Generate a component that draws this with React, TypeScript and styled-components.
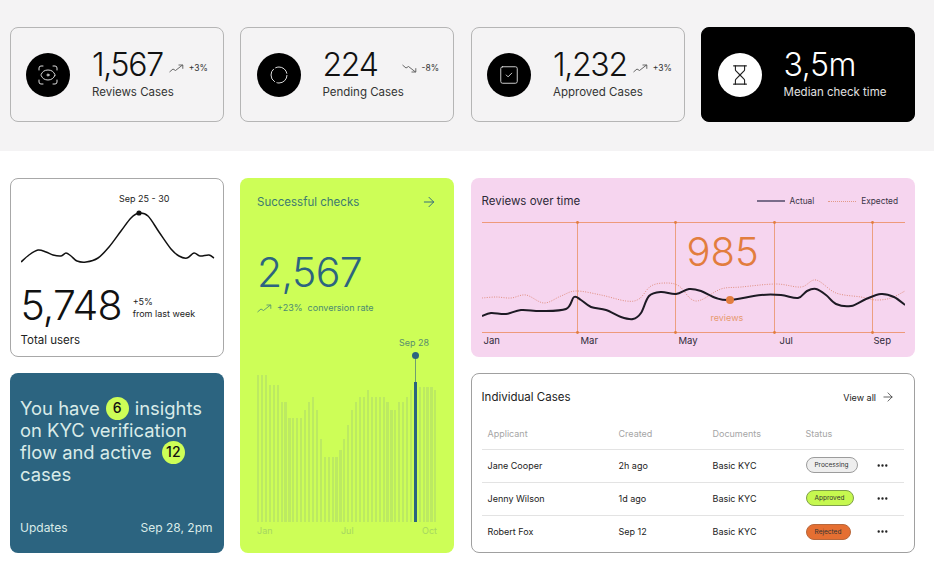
import React from "react";
import styled, {createGlobalStyle} from "styled-components";
import {ArrowRight, Ellipsis, Hourglass, ScanEye, SquareCheck} from "lucide-react";

const GlobalStyle = createGlobalStyle`
  body {
    margin: 0;
    background: #fff;
    font-family: "Inter", "Liberation Sans", sans-serif;
    color: #111;
    overflow: hidden;
  }
`;

const Band = styled.section`
  background: #f4f3f4;
  height: 151px;
  box-sizing: border-box;
  padding: 27px 19px 0 9.5px;
  display: grid;
  grid-template-columns: repeat(4, 214px);
  gap: 16.5px;
  align-items: start;
`;

const StatCard = styled.div<{ $dark?: boolean }>`
  height: 95px;
  box-sizing: border-box;
  border-radius: 8px;
  border: 1px solid ${p => p.$dark ? "#000" : "#b5b5b5"};
  background: ${p => p.$dark ? "#000" : "transparent"};
  color: ${p => p.$dark ? "#fff" : "#111"};
  display: flex;
  align-items: center;
  gap: 22px;
  padding: 0 0 0 15.5px;
`;

const IconCircle = styled.div<{ $dark?: boolean }>`
  width: 44px;
  height: 44px;
  border-radius: 50%;
  flex: none;
  background: ${p => p.$dark ? "#fff" : "#000"};
  color: ${p => p.$dark ? "#222" : "#ddd"};
  display: flex;
  align-items: center;
  justify-content: center;
`;

const StatBody = styled.div`
  display: flex;
  flex-direction: column;
  gap: 2px;
  margin-bottom: 4px;
`;

const StatTop = styled.div`
  display: flex;
  align-items: center;
`;

const StatNumber = styled.span<{ $dark?: boolean }>`
  font-size: 32px;
  font-weight: 300;
  line-height: 36px;
  letter-spacing: ${p => p.$dark ? -0.4 : -1.3}px;
`;

const StatLabel = styled.span<{ $dark?: boolean }>`
  font-size: 11.5px;
  line-height: 14px;
  color: ${p => p.$dark ? "#e2e2e2" : "#333"};
`;

const Delta = styled.span<{ $left: number }>`
  display: flex;
  align-items: center;
  gap: 5px;
  margin-left: ${p => p.$left}px;
  margin-top: 7px;
  font-size: 8.5px;
  color: #333;
`;

const Board = styled.main`
  padding: 27px 19px 0 9.5px;
  display: grid;
  grid-template-columns: repeat(4, 214px);
  grid-template-rows: 179px 180px;
  gap: 16px 16.5px;
`;

const UsersCard = styled.section`
  grid-column: 1;
  grid-row: 1;
  border: 1px solid #a8a8a8;
  border-radius: 8px;
  box-sizing: border-box;
  padding: 13px 10px 0;
`;

const PeakLabel = styled.div`
  font-size: 9px;
  line-height: 12px;
  padding-left: 98.5px;
  margin-top: 1px;
  color: #222;
`;

const BlockSvg = styled.svg`
  display: block;
`;

const UsersRow = styled.div`
  display: flex;
  align-items: center;
  gap: 11px;
  margin-top: 15px;
`;

const UsersNumber = styled.span`
  font-size: 41px;
  line-height: 46px;
  font-weight: 300;
  letter-spacing: -0.9px;
`;

const UsersNote = styled.span`
  font-size: 9px;
  line-height: 12px;
  margin-top: 6px;
  color: #222;
`;

const UsersLabel = styled.div`
  font-size: 11.5px;
  line-height: 14px;
  margin-top: 5px;
  color: #222;
`;

const GreenCard = styled.section`
  grid-column: 2;
  grid-row: 1 / span 2;
  background: #cdfe57;
  border-radius: 8px;
  padding: 17px 17px 0;
  display: flex;
  flex-direction: column;
  color: #2c6480;
`;

const GreenHead = styled.div`
  display: flex;
  justify-content: space-between;
  align-items: center;
  height: 14px;
  font-size: 11.5px;
  color: #3d7a70;
`;

const GreenNumber = styled.div`
  font-size: 41px;
  font-weight: 300;
  line-height: 46px;
  margin-top: 40px;
  letter-spacing: -0.6px;
`;

const GreenNote = styled.div`
  display: flex;
  align-items: center;
  gap: 5px;
  font-size: 9px;
  line-height: 12px;
  margin-top: 7px;
  color: #4b8a72;
`;

const Bars = styled.div`
  height: 168px;
  margin-top: 40px;
  display: flex;
  align-items: flex-end;
  justify-content: space-between;
`;

const Bar = styled.div`
  width: 2.2px;
  background: #bcea62;
`;

const ActiveBar = styled.div`
  width: 3px;
  background: #2c6480;
  position: relative;

  &::before {
    content: "";
    position: absolute;
    left: 1px;
    bottom: 100%;
    width: 1px;
    height: 26px;
    background: #6f9f70;
  }

  &::after {
    content: "";
    position: absolute;
    left: -2px;
    top: -30px;
    width: 7px;
    height: 7px;
    border-radius: 50%;
    background: #2c6480;
  }
`;

const ActiveLabel = styled.span`
  position: absolute;
  left: -15px;
  top: -45px;
  font-size: 9px;
  line-height: 12px;
  white-space: nowrap;
  color: #5a8f6c;
`;

const Axis = styled.div`
  display: flex;
  justify-content: space-between;
  font-size: 9px;
  line-height: 12px;
  margin-top: 3px;
  color: #a6d662;
`;

const PinkCard = styled.section`
  grid-column: 3 / span 2;
  grid-row: 1;
  background: #f6d5ef;
  border-radius: 8px;
  padding: 16px 11px 0;
`;

const PinkHead = styled.div`
  display: flex;
  align-items: center;
  height: 14px;
  font-size: 11.5px;
  color: #2e2a38;
`;

const Legend = styled.div`
  margin-left: auto;
  margin-right: 6px;
  display: flex;
  align-items: center;
  gap: 5px;
  font-size: 8.3px;
  color: #3a3446;
`;

const LegendLine = styled.span<{ $dotted?: boolean }>`
  width: 28px;
  margin-left: ${p => p.$dotted ? 9 : 0}px;
  border-top: ${p => p.$dotted ? "1px dotted #e39a88" : "2px solid #7a6c8a"};
`;

const ChartWrap = styled.div`
  position: relative;
  margin-top: 11px;
`;

const BigValue = styled.span`
  position: absolute;
  left: 205px;
  top: 9px;
  font-size: 40px;
  line-height: 48px;
  font-weight: 300;
  color: #e27d3e;
`;

const ValueCaption = styled.span`
  position: absolute;
  left: 229px;
  top: 93px;
  font-size: 9px;
  line-height: 12px;
  color: #e79a70;
`;

const Months = styled.div`
  display: grid;
  grid-template-columns: 97px 98px 101px 94px 1fr;
  padding-left: 2px;
  font-size: 9.5px;
  line-height: 12px;
  color: #2e2a38;
`;

const TableCard = styled.section`
  grid-column: 3 / span 2;
  grid-row: 2;
  border: 1px solid #a0a0a0;
  border-radius: 8px;
  padding: 15px 10px 0;
  box-sizing: border-box;
`;

const TableHead = styled.div`
  display: flex;
  justify-content: space-between;
  align-items: center;
  height: 16px;
  font-size: 11.5px;
  color: #222;
`;

const ViewAll = styled.span`
  display: flex;
  align-items: center;
  gap: 5px;
  font-size: 9px;
  margin-right: 9px;
`;

const Row = styled.div<{ $head?: boolean }>`
  display: grid;
  grid-template-columns: 131px 94px 93px 70px 1fr;
  align-items: center;
  box-sizing: border-box;
  height: 33px;
  padding: 0 0 2px 6px;
  font-size: 9px;
  color: ${p => p.$head ? "#a5a5a5" : "#222"};
  border-bottom: 1px solid #e3e3e3;

  &:first-child {
    padding-bottom: 0;
  }

  &:last-child {
    border-bottom: none;
  }
`;

const TableRows = styled.div`
  margin-top: 12px;
`;

const pillColors = {
    Processing: {bg: "#eeeeee", line: "#9c9c9c", width: 52},
    Approved: {bg: "#c6f84f", line: "#7f9f4a", width: 48},
    Rejected: {bg: "#e56f32", line: "#b8683c", width: 45}
};

const Pill = styled.span<{ $bg: string, $line: string, $width: number }>`
  width: ${p => p.$width}px;
  height: 16px;
  box-sizing: border-box;
  border-radius: 8px;
  border: 1px solid ${p => p.$line};
  background: ${p => p.$bg};
  display: flex;
  align-items: center;
  justify-content: center;
  font-size: 6.5px;
  color: #333;
`;

const Teal = styled.section`
  grid-column: 1;
  grid-row: 2;
  background: #2c6480;
  border-radius: 8px;
  padding: 24px 11px 0 10.5px;
  color: #d9ebe8;
  display: flex;
  flex-direction: column;
`;

const TealText = styled.div`
  font-size: 18.4px;
  height: 110px;
`;

const TealLine = styled.div<{ $gap?: number }>`
  display: flex;
  align-items: center;
  gap: ${p => p.$gap ?? 0}px;
  height: 22px;
`;

const Count = styled.span`
  flex: none;
  display: flex;
  align-items: center;
  justify-content: center;
  width: 23px;
  height: 23px;
  border-radius: 50%;
  background: #cdfe57;
  color: #111;
  font-size: 14px;
  font-weight: 500;
  line-height: 16px;
`;

const TealFoot = styled.div`
  display: flex;
  justify-content: space-between;
  font-size: 12px;
  line-height: 14px;
  margin-top: 14px;
`;

// x,y readings are in page coordinates, the viewBoxes below use the same ones
type Pt = [number, number]

function smooth(points: Pt[]) {
    let d = `M${points[0][0]} ${points[0][1]}`
    for (let i = 0; i < points.length - 1; i++) {
        const p0 = points[Math.max(i - 1, 0)]
        const p1 = points[i]
        const p2 = points[i + 1]
        const p3 = points[Math.min(i + 2, points.length - 1)]
        const c1x = p1[0] + (p2[0] - p0[0]) / 6
        const c1y = p1[1] + (p2[1] - p0[1]) / 6
        const c2x = p2[0] - (p3[0] - p1[0]) / 6
        const c2y = p2[1] - (p3[1] - p1[1]) / 6
        d += ` C${c1x} ${c1y} ${c2x} ${c2y} ${p2[0]} ${p2[1]}`
    }
    return d
}

const usersLine: Pt[] = [[20, 261], [28, 254], [37, 249], [45, 251], [52, 254], [60, 255], [65, 252], [70, 255], [76, 260], [85, 261], [97, 257], [108, 246], [120, 230], [130, 217], [138, 212], [147, 215], [158, 231], [170, 248], [178, 255], [186, 257], [193, 252], [199, 255], [208, 254], [213, 257]]

const actualLine: Pt[] = [[481, 316], [490, 313], [505, 314], [520, 310], [540, 311], [565, 309], [573, 297], [580, 300], [590, 307], [605, 310], [620, 317], [632, 319], [640, 313], [648, 296], [660, 292], [675, 294], [688, 289], [700, 291], [715, 298], [729, 300], [760, 295], [780, 295], [797, 298], [806, 291], [815, 289], [825, 295], [835, 304], [850, 306], [865, 299], [880, 294], [893, 297], [904, 305]]

const expectedLine: Pt[] = [[481, 298], [495, 297], [510, 298], [525, 295], [543, 303], [560, 296], [575, 291], [600, 295], [625, 301], [638, 299], [650, 286], [665, 283], [678, 286], [690, 299], [700, 300], [720, 289], [740, 287], [775, 284], [800, 287], [815, 280], [835, 293], [860, 297], [875, 300], [890, 298], [904, 291]]

const barTops = [133, 133, 133, 163, 163, 163, 215, 215, 262, 262, 262, 262, 240, 215, 200, 240, 325, 380, 380, 380, 380, 360, 325, 285, 240, 215, 200, 200, 180, 200, 200, 200, 200, 215, 240, 240, 215, 215, 200, 180, 155, 170, 170, 170, 170, 180]
const activeBar = 40

const cases = [
    {name: "Jane Cooper", created: "2h ago", status: "Processing" as const},
    {name: "Jenny Wilson", created: "1d ago", status: "Approved" as const},
    {name: "Robert Fox", created: "Sep 12", status: "Rejected" as const}
]

function Trend(props: { down?: boolean, color?: string }) {
    return (
        <svg width="15" height="9" viewBox="0 0 15 9" fill="none" stroke={props.color ?? "#444"} strokeWidth="0.8"
             style={props.down ? {transform: "scaleY(-1)"} : undefined}>
            <path d="M0.5 8 L4 5 L6.5 6.5 L13.5 1"/>
            <path d="M9.5 1 H13.8 V4.8"/>
        </svg>
    )
}

function Stat(props: { value: string, label: string, delta?: string, down?: boolean, left?: number, dark?: boolean, icon: React.ReactNode }) {
    return (
        <StatCard $dark={props.dark}>
            <IconCircle $dark={props.dark}>{props.icon}</IconCircle>
            <StatBody>
                <StatTop>
                    <StatNumber $dark={props.dark}>{props.value}</StatNumber>
                    {props.delta &&
                        <Delta $left={props.left ?? 6}><Trend down={props.down}/>{props.delta}</Delta>}
                </StatTop>
                <StatLabel $dark={props.dark}>{props.label}</StatLabel>
            </StatBody>
        </StatCard>
    )
}

export default function App() {
    return (
        <>
            <GlobalStyle/>
            <Band>
                <Stat value="1,567" label="Reviews Cases" delta="+3%" icon={<ScanEye size={24} strokeWidth={1}/>}/>
                <Stat value="224" label="Pending Cases" delta="-8%" down left={24} icon={
                    <svg width="20" height="20" viewBox="0 0 20 20" fill="none" stroke="#ddd" strokeWidth="1">
                        <circle cx="10" cy="10" r="8" strokeDasharray="15 1.8"/>
                    </svg>
                }/>
                <Stat value="1,232" label="Approved Cases" delta="+3%" icon={<SquareCheck size={22} strokeWidth={1}/>}/>
                <Stat value="3,5m" label="Median check time" dark icon={<Hourglass size={22} strokeWidth={1.2}/>}/>
            </Band>
            <Board>
                <UsersCard>
                    <PeakLabel>Sep 25 - 30</PeakLabel>
                    <BlockSvg width="194" height="62" viewBox="20 204 194 62" fill="none">
                        <path d={smooth(usersLine)} stroke="#111" strokeWidth="1.5"/>
                        <circle cx="138" cy="212" r="2.6" fill="#111"/>
                    </BlockSvg>
                    <UsersRow>
                        <UsersNumber>5,748</UsersNumber>
                        <UsersNote>+5%<br/>from last week</UsersNote>
                    </UsersRow>
                    <UsersLabel>Total users</UsersLabel>
                </UsersCard>
                <GreenCard>
                    <GreenHead>Successful checks<ArrowRight size={16} strokeWidth={1.4} color="#2c6480"/></GreenHead>
                    <GreenNumber>2,567</GreenNumber>
                    <GreenNote><Trend color="#4b8a72"/>+23%&nbsp; conversion rate</GreenNote>
                    <Bars>
                        {barTops.map((top, i) => {
                            const height = (575 - top) / 3
                            return i === activeBar
                                ? <ActiveBar key={i} style={{height}}><ActiveLabel>Sep 28</ActiveLabel></ActiveBar>
                                : <Bar key={i} style={{height}}/>
                        })}
                    </Bars>
                    <Axis><span>Jan</span><span>Jul</span><span>Oct</span></Axis>
                </GreenCard>
                <PinkCard>
                    <PinkHead>
                        Reviews over time
                        <Legend>
                            <LegendLine/>Actual<LegendLine $dotted/>Expected
                        </Legend>
                    </PinkHead>
                    <ChartWrap>
                        <BlockSvg width="423" height="116" viewBox="481 219 423 116" fill="none">
                            <g stroke="#ee9a7a" strokeWidth="1">
                                <path d="M481 222.5H904M481 332.5H904"/>
                                <path d="M576.5 222V332M674.5 222V332M773.5 222V332M871.5 222V332" stroke="#ec9f80"/>
                            </g>
                            <g fill="#e27d3e">
                                {[576.5, 674.5, 773.5, 871.5].map(x => (
                                    <React.Fragment key={x}>
                                        <circle cx={x} cy="222.5" r="1.4"/>
                                        <circle cx={x} cy="332.5" r="1.4"/>
                                    </React.Fragment>
                                ))}
                            </g>
                            <path d={smooth(expectedLine)} stroke="#e08f80" strokeWidth="1" strokeDasharray="1 1.4"/>
                            <path d={smooth(actualLine)} stroke="#1d1a24" strokeWidth="2"/>
                            <circle cx="729" cy="300" r="4" fill="#e27d3e"/>
                        </BlockSvg>
                        <BigValue>985</BigValue>
                        <ValueCaption>reviews</ValueCaption>
                    </ChartWrap>
                    <Months>
                        <span>Jan</span><span>Mar</span><span>May</span><span>Jul</span><span>Sep</span>
                    </Months>
                </PinkCard>
                <Teal>
                    <TealText>
                        <TealLine $gap={6}><span>You have</span><Count>6</Count><span>insights</span></TealLine>
                        <TealLine>on KYC verification</TealLine>
                        <TealLine $gap={10}><span>flow and active</span><Count>12</Count></TealLine>
                        <TealLine>cases</TealLine>
                    </TealText>
                    <TealFoot><span>Updates</span><span>Sep 28, 2pm</span></TealFoot>
                </Teal>
                <TableCard>
                    <TableHead>
                        Individual Cases
                        <ViewAll>View all <ArrowRight size={14} strokeWidth={1.2}/></ViewAll>
                    </TableHead>
                    <TableRows>
                        <Row $head>
                            <span>Applicant</span><span>Created</span><span>Documents</span><span>Status</span>
                        </Row>
                        {cases.map(c => {
                            const pill = pillColors[c.status]
                            return (
                                <Row key={c.name}>
                                    <span>{c.name}</span>
                                    <span>{c.created}</span>
                                    <span>Basic KYC</span>
                                    <Pill $bg={pill.bg} $line={pill.line} $width={pill.width}>{c.status}</Pill>
                                    <Ellipsis size={13} strokeWidth={2.4} color="#222"/>
                                </Row>
                            )
                        })}
                    </TableRows>
                </TableCard>
            </Board>
        </>
    )
}
